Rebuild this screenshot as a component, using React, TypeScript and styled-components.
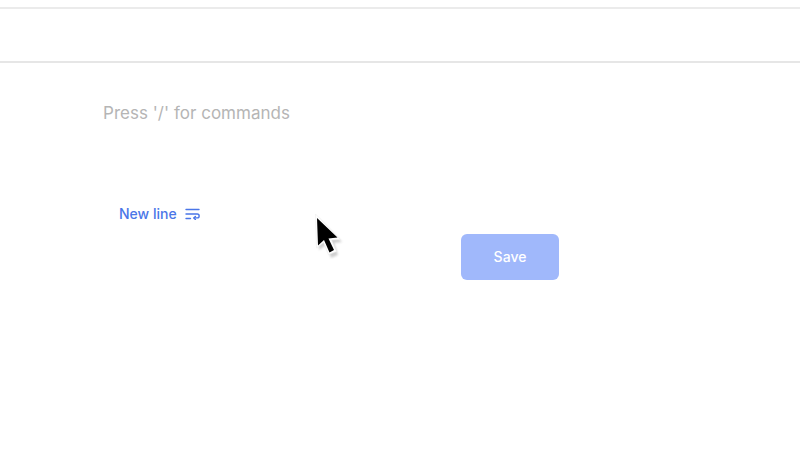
import React from "react";
import styled, { createGlobalStyle } from "styled-components";

const Global = createGlobalStyle`
  html, body { margin: 0; padding: 0; background: #fff; }
  body { font-family: Inter, "Liberation Sans", sans-serif; }
`;

const Page = styled.div`
  position: relative;
  width: 800px;
  height: 450px;
  overflow: hidden;
  background: #fff;
`;

const TopStrip = styled.div`
  height: 7px;
  border-bottom: 2px solid #ebebeb;
`;

const Toolbar = styled.div`
  height: 52px;
  border-bottom: 2px solid #e6e6e6;
`;

const Editor = styled.div`
  padding: 39px 0 0 103px;
  height: 56px;
`;

const Placeholder = styled.div`
  font-size: 17px;
  line-height: 22px;
  letter-spacing: 0.02px;
  color: #b5b5b5;
`;

const Actions = styled.div`
  display: flex;
  align-items: flex-start;
  margin-top: 38px;
  padding-left: 119px;
`;

const NewLine = styled.button`
  display: flex;
  align-items: center;
  gap: 8px;
  width: 342px;
  height: 20px;
  margin-top: 8px;
  padding: 0;
  border: 0;
  background: none;
  font: 500 14px/20px Inter, "Liberation Sans", sans-serif;
  color: #4a76e8;
`;

const SaveButton = styled.button`
  width: 98px;
  height: 46px;
  margin-top: 38px;
  border: 0;
  border-radius: 6px;
  background: #a0b8fb;
  font: 500 14px/20px Inter, "Liberation Sans", sans-serif;
  color: #fff;
`;

const Cursor = styled.svg`
  position: absolute;
  left: 312px;
  top: 212px;
`;

const WrapIcon = () => (
  <svg width="15" height="12" viewBox="0 0 15 12" fill="none" stroke="#4a76e8" strokeWidth="1.4" strokeLinecap="round" strokeLinejoin="round">
    <path d="M1 1.5h13" />
    <path d="M1 6h11.2a1.9 1.9 0 0 1 0 3.9H9" />
    <path d="M10.4 8.4 8.9 9.9l1.5 1.5" />
    <path d="M1 10.5h4.5" />
  </svg>
);

export default function App() {
  return (
    <Page>
      <Global />
      <TopStrip />
      <Toolbar />
      <Editor>
        <Placeholder>Press '/' for commands</Placeholder>
      </Editor>
      <Actions>
        <NewLine>
          New line
          <WrapIcon />
        </NewLine>
        <SaveButton>Save</SaveButton>
      </Actions>
      <Cursor width="36" height="52" viewBox="0 0 36 52">
        <defs>
          <filter id="cursor-shadow" x="-30%" y="-30%" width="160%" height="160%">
            <feGaussianBlur stdDeviation="1.2" />
          </filter>
        </defs>
        <path d="M4 4 L5 36 L12 31 L17 44 L24 41 L20 29 L28 28 Z" fill="#777" opacity="0.35" filter="url(#cursor-shadow)" transform="translate(2 2)" />
        <path d="M3.5 2 L4.5 36 L11.5 30.5 L16.5 42.5 L24.5 39.5 L19.5 28 L28.5 27.5 Z" fill="#fff" stroke="#ececec" strokeWidth="0.6" />
        <path d="M5 6 L25.5 25.5 L16.5 26.5 L22 38 L17.5 40.5 L12 28 L6 33.5 Z" fill="#000" />
      </Cursor>
    </Page>
  );
}
